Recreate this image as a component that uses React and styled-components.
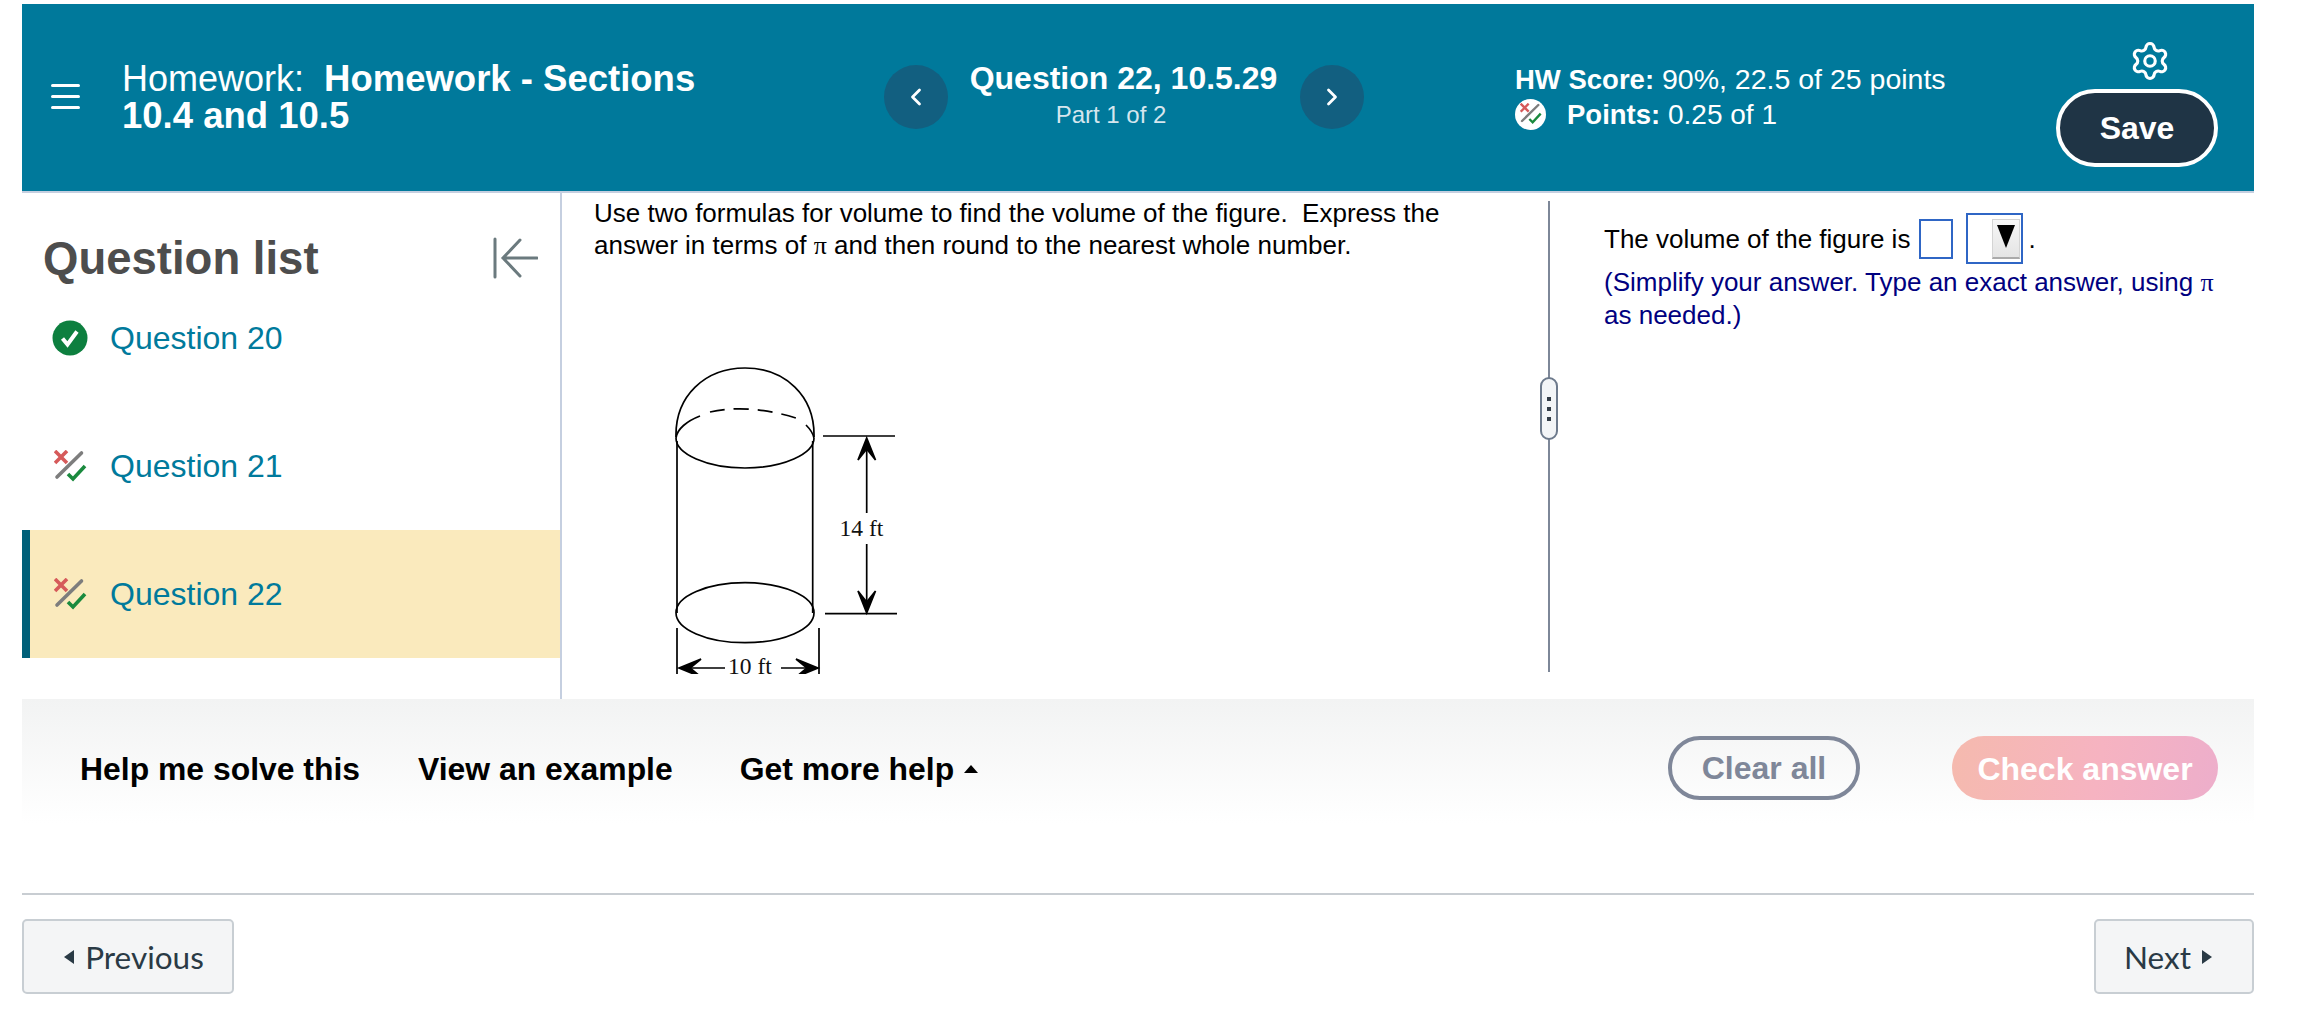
import styled, { createGlobalStyle } from 'styled-components';
import { ChevronLeft, ChevronRight, Settings } from 'lucide-react';

const GlobalStyle = createGlobalStyle`
  html, body {
    margin: 0;
    background: #fff;
  }
  * {
    box-sizing: border-box;
  }
`;

const Page = styled.div`
  width: 2302px;
  height: 1023px;
  padding: 4px 48px 0 22px;
  font-family: "Liberation Sans", Arial, sans-serif;
  overflow: hidden;
`;

const Header = styled.header`
  display: flex;
  height: 189px;
  padding: 0 36px 2px 0;
  align-items: center;
  background: #00799b;
  border-bottom: 2px solid #c5cfe0;
  color: #fff;
`;

const Menu = styled.div`
  display: flex;
  flex-direction: column;
  gap: 8px;
  width: 29px;
  margin: 0 42px 0 29px;
  span {
    height: 3px;
    border-radius: 2px;
    background: #fff;
  }
`;

const TitleBlock = styled.div`
  width: 762px;
  padding-right: 170px;
  font-size: 36px;
  line-height: 37px;
  white-space: pre-wrap;
  b {
    font-size: 36.5px;
    font-weight: 700;
  }
`;

const NavCircle = styled.div`
  display: flex;
  width: 64px;
  height: 64px;
  align-items: center;
  justify-content: center;
  border-radius: 50%;
  background: #125f80;
`;

const QuestionBlock = styled.div`
  width: 352px;
  padding-right: 1px;
  text-align: center;
`;

const QuestionTitle = styled.div`
  font-size: 32px;
  font-weight: 700;
  line-height: 37px;
`;

const QuestionPart = styled.div`
  padding-right: 25px;
  font-size: 24px;
  line-height: 36px;
  color: #d6e6ee;
`;

const ScoreBlock = styled.div`
  flex: 1;
  margin-left: 151px;
  font-size: 28.5px;
  line-height: 35px;
  b {
    font-size: 27.5px;
  }
`;

const ScoreRow = styled.div`
  display: flex;
  align-items: center;
  gap: 21px;
  white-space: pre;
`;

const PointsText = styled.span`
  font-size: 28px;
`;

const ScoreBadge = styled.div`
  display: flex;
  width: 31px;
  height: 31px;
  align-items: center;
  justify-content: center;
  border-radius: 50%;
  background: #fff;
`;

const HeaderActions = styled.div`
  display: flex;
  flex-direction: column;
  align-items: center;
  align-self: flex-end;
  gap: 7px;
  padding-bottom: 22px;
`;

const GearButton = styled.div`
  display: flex;
  height: 42px;
  margin-left: 26px;
`;

const SaveButton = styled.div`
  display: flex;
  width: 162px;
  height: 78px;
  align-items: center;
  justify-content: center;
  border: 4px solid #fff;
  border-radius: 39px;
  background: #1f3445;
  font-size: 32px;
  font-weight: 700;
`;

const Main = styled.main`
  display: flex;
  height: 506px;
`;

const Sidebar = styled.aside`
  width: 540px;
  border-right: 2px solid #c5cfe0;
`;

const SidebarHead = styled.div`
  display: flex;
  height: 81px;
  padding: 50px 22px 0 21px;
  align-items: center;
  justify-content: space-between;
`;

const SidebarTitle = styled.div`
  font-size: 45.5px;
  font-weight: 700;
  line-height: 31px;
  color: #4d4d4d;
`;

const CollapseSvg = styled.svg`
  margin-top: -2px;
`;

const Row = styled.div`
  display: flex;
  height: 128px;
  padding-left: ${({ $active }) => ($active ? '22px' : '30px')};
  align-items: center;
  gap: 22px;
  border-left: ${({ $active }) => ($active ? '8px solid #006079' : 'none')};
  background: ${({ $active }) => ($active ? '#faeabd' : 'transparent')};
  font-size: 32px;
  color: #007a9c;
`;

const RowIcon = styled.div`
  display: flex;
  width: 36px;
  justify-content: center;
`;

const QuestionPanel = styled.section`
  width: 986px;
  padding: 4px 0 0 32px;
`;

const BodyText = styled.div`
  width: 880px;
  font-size: 26px;
  line-height: 32px;
  color: #000;
  white-space: pre-wrap;
`;

const Pi = styled.span`
  font-family: "Liberation Serif", serif;
`;

const Figure = styled.svg`
  display: block;
  margin: 78px 0 0 26px;
`;

const AnswerPanel = styled.section`
  position: relative;
  width: 705px;
  height: 471px;
  margin-top: 8px;
  padding: 12px 0 0 54px;
  border-left: 2px solid #7d8798;
  font-size: 26px;
`;

const Handle = styled.div`
  position: absolute;
  top: 176px;
  left: -10px;
  display: flex;
  flex-direction: column;
  width: 18px;
  height: 63px;
  align-items: center;
  justify-content: center;
  gap: 6px;
  border: 2px solid #6d7a8c;
  border-radius: 9px;
  background: #f3f5f7;
  span {
    width: 4px;
    height: 4px;
    background: #333d47;
  }
`;

const AnswerLine = styled.div`
  display: flex;
  height: 51px;
  align-items: center;
`;

const AnswerText = styled.span`
  padding-top: 2px;
`;

const AnswerInput = styled.div`
  width: 34px;
  height: 40px;
  margin: 0 13px 0 9px;
  border: 2px solid #2f66c5;
`;

const AnswerSelect = styled.div`
  display: flex;
  width: 57px;
  height: 51px;
  margin-right: 5px;
  padding-right: 1px;
  align-items: center;
  justify-content: flex-end;
  border: 2px solid #2f66c5;
`;

const SelectArrow = styled.div`
  display: flex;
  width: 28px;
  height: 40px;
  padding-top: 5px;
  justify-content: center;
  border: 1px solid #d4d4d4;
  border-bottom: 2px solid #aaa;
  background: linear-gradient(#f7f7f7, #e4e4e4);
  &::before {
    content: '';
    width: 0;
    height: 0;
    border-left: 9px solid transparent;
    border-right: 9px solid transparent;
    border-top: 23px solid #000;
  }
`;

const Hint = styled.div`
  width: 626px;
  margin-top: 2px;
  line-height: 33px;
  color: #000080;
`;

const HelpBand = styled.section`
  display: flex;
  height: 196px;
  padding: 37px 36px 0 58px;
  align-items: flex-start;
  background: linear-gradient(#f2f3f3 0, #fff 125px);
  border-bottom: 2px solid #c8cdd2;
`;

const HelpLink = styled.div`
  display: flex;
  height: 64px;
  margin-right: ${({ $gap }) => $gap}px;
  padding-top: 2px;
  align-items: center;
  gap: 10px;
  font-size: 31.9px;
  font-weight: 700;
  color: #000;
`;

const UpCaret = styled.span`
  width: 0;
  height: 0;
  border-left: 7px solid transparent;
  border-right: 7px solid transparent;
  border-bottom: 8px solid #000;
`;

const ClearButton = styled.div`
  display: flex;
  width: 192px;
  height: 64px;
  margin-left: auto;
  padding-top: 1px;
  align-items: center;
  justify-content: center;
  border: 4px solid #7f8799;
  border-radius: 32px;
  font-size: 32px;
  font-weight: 700;
  color: #7f8799;
`;

const CheckButton = styled.div`
  display: flex;
  width: 266px;
  height: 64px;
  margin-left: 92px;
  padding-top: 2px;
  align-items: center;
  justify-content: center;
  border-radius: 32px;
  background: linear-gradient(100deg, #f5baae, #f6b3c1 55%, #edaecb);
  font-size: 32px;
  font-weight: 700;
  color: #fff;
`;

const Footer = styled.footer`
  display: flex;
  padding-top: 24px;
  justify-content: space-between;
`;

const PagerButton = styled.div`
  display: flex;
  width: ${({ $width }) => $width}px;
  height: 75px;
  padding: ${({ $side }) => ($side === 'left' ? '0 0 0 12px' : '0 12px 0 0')};
  align-items: center;
  justify-content: center;
  gap: 11px;
  border: 2px solid #c8ced3;
  border-radius: 5px;
  background: #f4f5f6;
  font-family: Lato, sans-serif;
  font-size: 31.5px;
  color: #2a3a45;
`;

const PagerArrow = styled.span`
  width: 0;
  height: 0;
  border-top: 7px solid transparent;
  border-bottom: 7px solid transparent;
  border-left: ${({ $dir }) => ($dir === 'right' ? '10px solid #2a3a45' : 'none')};
  border-right: ${({ $dir }) => ($dir === 'left' ? '10px solid #2a3a45' : 'none')};
`;

function PartialIcon({ size = 33 }) {
  return (
    <svg width={size} height={size} viewBox="0 0 33 33" fill="none" strokeWidth="3.6">
      <path d="M1 1 L13 13 M13 1 L1 13" stroke="#d65a5a" />
      <path d="M3 27 L27.5 3" stroke="#7d7d7d" strokeLinecap="round" />
      <path d="M14 24 L19 29 L31 16" stroke="#1a8a3e" />
    </svg>
  );
}

function CheckIcon() {
  return (
    <svg width="36" height="36" viewBox="0 0 36 36">
      <circle cx="18" cy="18" r="17.5" fill="#0d7f3f" />
      <path d="M10.5 18.5 L15.5 24.5 L25 11.5" fill="none" stroke="#fff" strokeWidth="4" />
    </svg>
  );
}

function CollapseIcon() {
  return (
    <CollapseSvg width="45" height="42" viewBox="0 0 45 42" fill="none" stroke="#6b7a7e" strokeWidth="3" strokeLinecap="round">
      <path d="M2 2 V40 M44 21 H10 M27 3 L10 21 L27 39" />
    </CollapseSvg>
  );
}

function VolumeFigure() {
  return (
    <Figure width="320" height="334" viewBox="0 -1 320 334" fill="none" stroke="#000" strokeWidth="1.7">
      <path d="M56 96 C55 55 85 27 125 27 C165 27 195 55 194 96" />
      <path d="M56 97 C56 113 87 127 125 127 C163 127 194 113 194 97" />
      <path d="M56 97 C57 88 67 80 80 75" />
      <path d="M90 71 C112 66 140 66 176 77" strokeDasharray="15 9" />
      <path d="M186 84 C190 88 193 92 194 97" />
      <path d="M57 100 V272 M192.7 100 V272" />
      <ellipse cx="125" cy="271.7" rx="69" ry="30" />
      <path d="M203 95 H275 M205 272.7 H277 M246.7 100 V172 M246.7 203 V268" />
      <path d="M246.7 97 L255.5 119 L246.7 108 L238 119 Z" fill="#000" />
      <path d="M246.7 272 L255.5 250 L246.7 261 L238 250 Z" fill="#000" />
      <path d="M57 287 V333 M199 287 V333 M60 327 H105 M161 327 H196" />
      <path d="M59 327 L81 318 L70 327 L81 336 Z" fill="#000" />
      <path d="M198 327 L176 318 L187 327 L176 336 Z" fill="#000" />
      <text x="219.5" y="195" fill="#111" stroke="none" fontFamily='"Liberation Serif", serif' fontSize="23.5">14 ft</text>
      <text x="108" y="333" fill="#111" stroke="none" fontFamily='"Liberation Serif", serif' fontSize="23.5">10 ft</text>
    </Figure>
  );
}

export default function App() {
  return (
    <Page>
      <GlobalStyle />
      <Header>
        <Menu><span /><span /><span /></Menu>
        <TitleBlock>
          {'Homework:  '}<b>Homework - Sections 10.4 and 10.5</b>
        </TitleBlock>
        <NavCircle><ChevronLeft size={28} color="#fff" strokeWidth={2.4} /></NavCircle>
        <QuestionBlock>
          <QuestionTitle>Question 22, 10.5.29</QuestionTitle>
          <QuestionPart>Part 1 of 2</QuestionPart>
        </QuestionBlock>
        <NavCircle><ChevronRight size={28} color="#fff" strokeWidth={2.4} /></NavCircle>
        <ScoreBlock>
          <ScoreRow><span><b>HW Score:</b> 90%, 22.5 of 25 points</span></ScoreRow>
          <ScoreRow>
            <ScoreBadge><PartialIcon size={22} /></ScoreBadge>
            <PointsText><b>Points:</b> 0.25 of 1</PointsText>
          </ScoreRow>
        </ScoreBlock>
        <HeaderActions>
          <GearButton><Settings size={42} color="#fff" strokeWidth={1.8} /></GearButton>
          <SaveButton>Save</SaveButton>
        </HeaderActions>
      </Header>
      <Main>
        <Sidebar>
          <SidebarHead>
            <SidebarTitle>Question list</SidebarTitle>
            <CollapseIcon />
          </SidebarHead>
          <Row><RowIcon><CheckIcon /></RowIcon>Question 20</Row>
          <Row><RowIcon><PartialIcon /></RowIcon>Question 21</Row>
          <Row $active><RowIcon><PartialIcon /></RowIcon>Question 22</Row>
        </Sidebar>
        <QuestionPanel>
          <BodyText>
            {'Use two formulas for volume to find the volume of the figure.  Express the answer in terms of '}
            <Pi>π</Pi> and then round to the nearest whole number.
          </BodyText>
          <VolumeFigure />
        </QuestionPanel>
        <AnswerPanel>
          <Handle><span /><span /><span /></Handle>
          <AnswerLine>
            <AnswerText>The volume of the figure is</AnswerText>
            <AnswerInput />
            <AnswerSelect><SelectArrow /></AnswerSelect>
            <AnswerText>.</AnswerText>
          </AnswerLine>
          <Hint>(Simplify your answer. Type an exact answer, using <Pi>π</Pi> as needed.)</Hint>
        </AnswerPanel>
      </Main>
      <HelpBand>
        <HelpLink $gap={58}>Help me solve this</HelpLink>
        <HelpLink $gap={67}>View an example</HelpLink>
        <HelpLink $gap={0}>Get more help <UpCaret /></HelpLink>
        <ClearButton>Clear all</ClearButton>
        <CheckButton>Check answer</CheckButton>
      </HelpBand>
      <Footer>
        <PagerButton $width={212} $side="left"><PagerArrow $dir="left" />Previous</PagerButton>
        <PagerButton $width={160} $side="right">Next<PagerArrow $dir="right" /></PagerButton>
      </Footer>
    </Page>
  );
}
